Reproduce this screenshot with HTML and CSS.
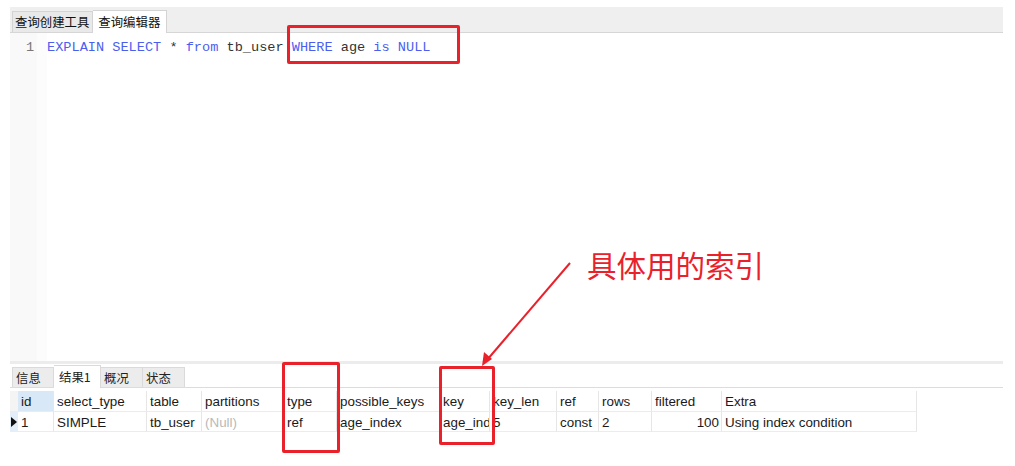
FILE: index.html
```html
<!DOCTYPE html>
<html>
<head>
<meta charset="utf-8">
<link rel="stylesheet" href="styles.css">
</head>
<body>
<div class="app">
  <div class="tabbar">
    <div class="tab">查询创建工具</div>
    <div class="tab active">查询编辑器</div>
  </div>
  <div class="editor">
    <div class="gutter"><div class="ln">1</div></div>
    <div class="code"><span class="kw">EXPLAIN SELECT</span> * <span class="kw">from</span> tb_user <span class="kw">WHERE</span> age <span class="kw">is NULL</span></div>
  </div>
  <div class="bottom">
    <div class="tabbar2">
      <div class="tab2">信息</div>
      <div class="tab2 active">结果1</div>
      <div class="tab2">概况</div>
      <div class="tab2">状态</div>
    </div>
    <div class="grid">
      <div class="c ind"></div>
      <div class="c sel">id</div>
      <div class="c">select_type</div>
      <div class="c">table</div>
      <div class="c">partitions</div>
      <div class="c">type</div>
      <div class="c">possible_keys</div>
      <div class="c">key</div>
      <div class="c">key_len</div>
      <div class="c">ref</div>
      <div class="c">rows</div>
      <div class="c">filtered</div>
      <div class="c">Extra</div>

      <div class="c ind cur"><span class="tri"></span></div>
      <div class="c">1</div>
      <div class="c">SIMPLE</div>
      <div class="c">tb_user</div>
      <div class="c null">(Null)</div>
      <div class="c">ref</div>
      <div class="c">age_index</div>
      <div class="c clip">age_index</div>
      <div class="c">5</div>
      <div class="c">const</div>
      <div class="c">2</div>
      <div class="c num">100</div>
      <div class="c">Using index condition</div>
    </div>
  </div>
</div>

<div class="box box-where"></div>
<div class="box box-type"></div>
<div class="box box-key"></div>
<div class="note">具体用的索引</div>
<svg class="arrow" width="1015" height="466" viewBox="0 0 1015 466">
  <line x1="570" y1="263" x2="487" y2="360" stroke="#e8212b" stroke-width="2"/>
  <polygon points="482,366 484,352 492,359" fill="#e8212b"/>
</svg>
</body>
</html>
```

FILE: styles.css
```css
html, body {
  margin: 0;
  padding: 0;
  background: #ffffff;
}
body {
  width: 1015px;
  height: 466px;
  position: relative;
  overflow: hidden;
  font-family: "Liberation Sans", "Noto Sans CJK SC", sans-serif;
  color: #222;
}
.app {
  margin: 7px 0 0 10px;
  width: 993px;
  display: flex;
  flex-direction: column;
}
.tabbar {
  height: 25px;
  background: #efefef;
  border-bottom: 1px solid #d6d6d6;
  display: flex;
  align-items: flex-end;
  padding-left: 2px;
}
.tab {
  font-family: "Noto Sans CJK SC", sans-serif;
  font-size: 12.4px;
  height: 21px;
  line-height: 21px;
  padding: 0 3px 0 2px;
  white-space: nowrap;
  background: #e9e9e9;
  border: 1px solid #d4d4d4;
  border-bottom: none;
  box-sizing: border-box;
  color: #111;
}
.tab.active {
  background: #fff;
  height: 23px;
  line-height: 23px;
  margin-bottom: -1px;
  padding: 0 6px 0 5px;
  border-left: none;
}
.editor {
  height: 328px;
  display: flex;
}
.gutter {
  width: 27px;
  background: #f9f9f9;
  border-right: 10px solid #fcfcfc;
  padding-top: 7px;
}
.ln {
  font-family: "Liberation Mono", monospace;
  font-size: 13.5px;
  line-height: 16px;
  color: #777;
  text-align: right;
  padding-right: 3px;
}
.code {
  font-family: "Liberation Mono", monospace;
  font-size: 13.6px;
  line-height: 16px;
  padding-top: 7px;
  padding-left: 0;
  color: #333;
  white-space: pre;
}
.kw {
  color: #4b5ef0;
}
.bottom {
  border-top: 3px solid #ececec;
  display: flex;
  flex-direction: column;
}
.tabbar2 {
  height: 24px;
  display: flex;
  align-items: flex-end;
  border-bottom: 1px solid #dcdcdc;
  padding-left: 2px;
  box-sizing: border-box;
}
.tab2 {
  font-family: "Noto Sans CJK SC", sans-serif;
  font-size: 12.4px;
  height: 20px;
  line-height: 20px;
  padding: 0 0 0 3px;
  width: 42px;
  flex: 0 0 auto;
  white-space: nowrap;
  box-sizing: border-box;
  background: #ececec;
  border: 1px solid #dadada;
  border-bottom: none;
}
.tab2.active {
  background: #fff;
  height: 23px;
  line-height: 23px;
  margin-bottom: -1px;
  padding-left: 5px;
  width: 47px;
}
.tab2 + .tab2 {
  border-left: none;
}
.tab2.active + .tab2 {
  border-left: none;
}
.grid {
  margin-top: 3px;
  display: grid;
  grid-template-columns: 8px 36px 93px 55px 82px 53px 103px 50px 67px 42px 53px 70px 195px;
  grid-template-rows: 21px 20px;
  width: 907px;
}
.c {
  font-size: 13.4px;
  line-height: 21px;
  padding-left: 3px;
  border-right: 1px solid #e6e6e6;
  border-bottom: 1px solid #ececec;
  white-space: nowrap;
  overflow: hidden;
  color: #1a1a1a;
  box-sizing: border-box;
}
.c.ind {
  padding: 0;
  background: #f4f4f4;
  border-right: none;
  position: relative;
}
.c.ind.cur {
  background: #e4eef8;
}
.tri {
  position: absolute;
  left: 1px;
  top: 5px;
  width: 0;
  height: 0;
  border-top: 5px solid transparent;
  border-bottom: 5px solid transparent;
  border-left: 6px solid #111;
}
.c.sel {
  background: #d9e8f7;
}
.c.null {
  color: #b9b9b9;
}
.c.num {
  text-align: right;
  padding-right: 2px;
}
.c.clip {
  text-overflow: clip;
}
.box {
  position: absolute;
  border: 3px solid #e8212b;
  border-radius: 2px;
  box-sizing: border-box;
}
.box-where {
  left: 287px;
  top: 25px;
  width: 173px;
  height: 39px;
}
.box-type {
  left: 282px;
  top: 362px;
  width: 58px;
  height: 91px;
}
.box-key {
  left: 439px;
  top: 366px;
  width: 56px;
  height: 79px;
}
.note {
  position: absolute;
  left: 587px;
  top: 244px;
  font-family: "Noto Sans CJK SC", sans-serif;
  font-size: 29.5px;
  line-height: 40px;
  color: #e8212b;
}
.arrow {
  position: absolute;
  left: 0;
  top: 0;
}
```
